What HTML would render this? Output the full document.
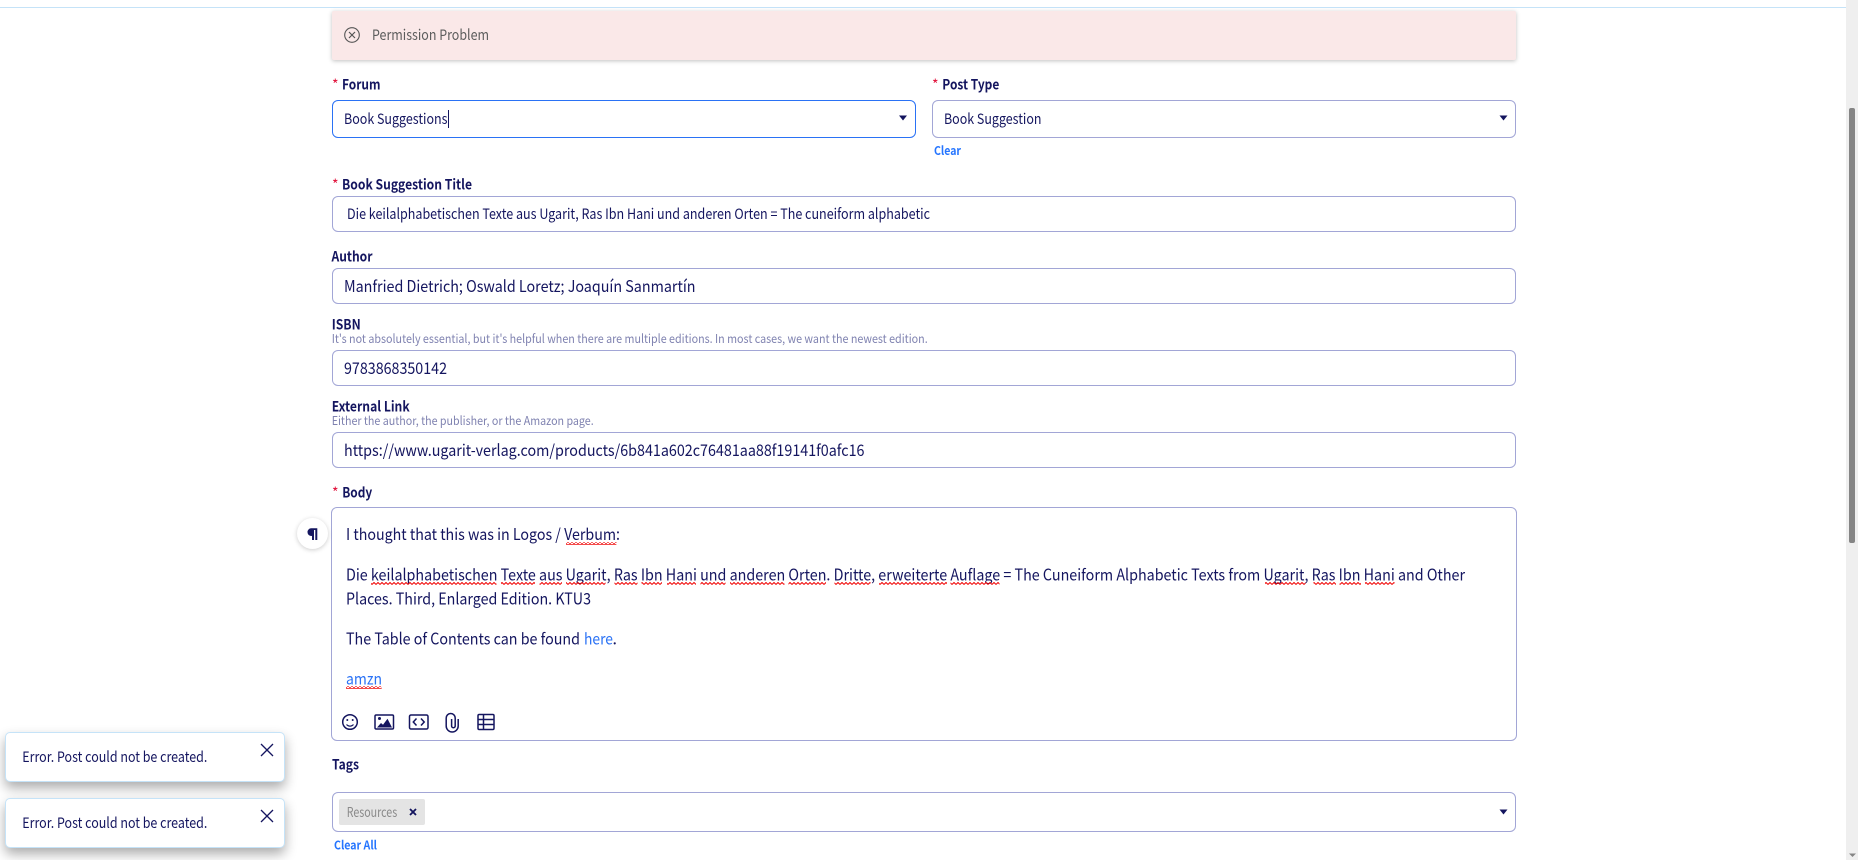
<!DOCTYPE html>
<html lang="en">
<head>
<meta charset="utf-8">
<title>New Post</title>
<style>
html,body{margin:0;padding:0;width:1858px;height:860px;overflow:hidden;background:#fff}
.b{position:absolute;box-sizing:border-box;background:#fff;border:1px solid #a2a6d6;border-radius:6px}
#line{position:absolute;left:0;top:7px;width:1846px;height:1px;background:#c5e3f8}
#sb{position:absolute;left:1846px;top:0;width:12px;height:860px;background:#efefef}
#th{position:absolute;left:1849px;top:108px;width:6px;height:435px;background:#858585;border-radius:2px}
#alert{position:absolute;left:332px;top:11px;width:1184px;height:49px;background:#fae8e8;border-radius:2px;box-shadow:0 1px 4px rgba(0,0,0,.25)}
.toast{position:absolute;left:5px;width:280px;height:50px;box-sizing:border-box;background:#fff;border:1px solid #c5e3f8;border-radius:5px;box-shadow:0 6px 12px rgba(0,0,0,.33)}
#pil{position:absolute;left:297px;top:518px;width:31px;height:31px;border-radius:50%;background:#fff;box-shadow:0 1px 5px rgba(0,0,0,.2)}
#chip{position:absolute;left:339px;top:799px;width:86px;height:26px;background:#e4e4e4;border-radius:2px}
svg{position:absolute;left:0;top:0}
text{font-family:"Noto Sans CJK SC","Liberation Sans",sans-serif;fill:#14155f;font-size:15px}
.l{font-weight:700;font-size:14px}
.s{fill:#e0103a;font-size:14px;font-weight:400}
.h{fill:#7f82b0;font-size:12px}
.a{fill:#2a72f5}
.c{fill:#2575ff;font-weight:700;font-size:12px}
.i{fill:none;stroke:#14155f;stroke-width:1.5}
</style>
</head>
<body>
<div id="line"></div>
<div id="sb"></div><div id="th"></div>
<div id="alert"></div>
<div class="b" style="left:332px;top:100px;width:584px;height:38px;border-color:#2a72f5"></div>
<div class="b" style="left:932px;top:100px;width:584px;height:38px"></div>
<div class="b" style="left:332px;top:196px;width:1184px;height:36px"></div>
<div class="b" style="left:332px;top:268px;width:1184px;height:36px"></div>
<div class="b" style="left:332px;top:350px;width:1184px;height:36px"></div>
<div class="b" style="left:332px;top:432px;width:1184px;height:36px"></div>
<div class="b" style="left:331px;top:507px;width:1186px;height:234px"></div>
<div class="b" style="left:332px;top:792px;width:1184px;height:40px"></div>
<div id="chip"></div>
<div id="pil"></div>
<div class="toast" style="top:732px"></div>
<div class="toast" style="top:798px"></div>

<svg width="1858" height="860" viewBox="0 0 1858 860" xmlns="http://www.w3.org/2000/svg">
<defs>
<pattern id="w" width="4" height="3" patternUnits="userSpaceOnUse"><path d="M0 2.500L2 .5L4 2.500" fill="none" stroke="#f00000" stroke-width="1"/></pattern>
</defs>

<!-- alert -->
<circle cx="352" cy="35" r="7.300" fill="none" stroke="#555" stroke-width="1.100"/>
<path d="M349 32l6 6M355 32l-6 6" stroke="#555" stroke-width="1.200" fill="none"/>
<text x="372" y="40" textLength="117" lengthAdjust="spacingAndGlyphs" style="fill:#5c5c5c;font-size:14.500px">Permission Problem</text>

<!-- forum / post type -->
<text x="332" y="89.500" class="s">*</text>
<text x="342" y="89.500" class="l" textLength="38.500" lengthAdjust="spacingAndGlyphs">Forum</text>
<text x="344" y="124" textLength="103.500" lengthAdjust="spacingAndGlyphs" style="font-size:14.500px">Book Suggestions</text>
<rect x="448" y="110" width="1" height="18" fill="#14155f"/>
<path d="M899 115.500h8l-4 5z" fill="#14155f"/>
<text x="932" y="89.500" class="s">*</text>
<text x="942.300" y="89.500" class="l" textLength="57" lengthAdjust="spacingAndGlyphs">Post Type</text>
<text x="944" y="124" textLength="97.500" lengthAdjust="spacingAndGlyphs" style="font-size:14.500px">Book Suggestion</text>
<path d="M1499.500 115.500h8l-4 5z" fill="#14155f"/>
<text x="934" y="155" class="c" textLength="27" lengthAdjust="spacingAndGlyphs">Clear</text>

<!-- title -->
<text x="332" y="189.500" class="s">*</text>
<text x="342" y="189.500" class="l" textLength="130" lengthAdjust="spacingAndGlyphs">Book Suggestion Title</text>
<text x="347" y="219" textLength="583" lengthAdjust="spacingAndGlyphs" style="font-size:14.500px">Die keilalphabetischen Texte aus Ugarit, Ras Ibn Hani und anderen Orten = The cuneiform alphabetic</text>

<!-- author -->
<text x="331.500" y="261.500" class="l" textLength="41" lengthAdjust="spacingAndGlyphs">Author</text>
<text x="344" y="292" textLength="351.500" lengthAdjust="spacingAndGlyphs" style="font-size:16px">Manfried Dietrich; Oswald Loretz; Joaquín Sanmartín</text>

<!-- isbn -->
<text x="331.700" y="329.500" class="l" textLength="29" lengthAdjust="spacingAndGlyphs">ISBN</text>
<text x="331.700" y="343" class="h" textLength="596" lengthAdjust="spacingAndGlyphs">It's not absolutely essential, but it's helpful when there are multiple editions. In most cases, we want the newest edition.</text>
<text x="344" y="374" textLength="103" lengthAdjust="spacingAndGlyphs" style="font-size:16px">9783868350142</text>

<!-- external link -->
<text x="331.700" y="411.500" class="l" textLength="78" lengthAdjust="spacingAndGlyphs">External Link</text>
<text x="331.700" y="425" class="h" textLength="262" lengthAdjust="spacingAndGlyphs">Either the author, the publisher, or the Amazon page.</text>
<text x="344" y="456" textLength="520.500" lengthAdjust="spacingAndGlyphs" style="font-size:16px">https://www.ugarit-verlag.com/products/6b841a602c76481aa88f19141f0afc16</text>

<!-- body -->
<text x="332" y="497.500" class="s">*</text>
<text x="342.200" y="497.500" class="l" textLength="30" lengthAdjust="spacingAndGlyphs">Body</text>

<!-- paragraph mark icon -->
<path d="M307.500 532.200a3.700 3.700 0 0 1 3.700-3.900h6.100v11.700h-2v-10h-1.300v10h-2v-4.100a3.800 3.800 0 0 1-4.500-3.700z" fill="#14155f"/>

<text x="346" y="540" textLength="274" lengthAdjust="spacingAndGlyphs" style="font-size:16px">I thought that this was in Logos / Verbum:</text>
<text x="346" y="580.500" textLength="1119" lengthAdjust="spacingAndGlyphs" style="font-size:16px">Die keilalphabetischen Texte aus Ugarit, Ras Ibn Hani und anderen Orten. Dritte, erweiterte Auflage = The Cuneiform Alphabetic Texts from Ugarit, Ras Ibn Hani and Other</text>
<text x="346" y="604.500" textLength="245" lengthAdjust="spacingAndGlyphs" style="font-size:16px">Places. Third, Enlarged Edition. KTU3</text>
<text x="346" y="644.500" textLength="234" lengthAdjust="spacingAndGlyphs" style="font-size:16px">The Table of Contents can be found</text>
<text x="584" y="644.500" class="a" textLength="29" lengthAdjust="spacingAndGlyphs" style="font-size:16px">here</text>
<text x="612.500" y="644.500" style="font-size:16px">.</text>
<text x="346" y="684.500" class="a" textLength="36" lengthAdjust="spacingAndGlyphs" style="font-size:16px">amzn</text>

<!-- spelling underlines -->
<g fill="url(#w)">
<rect x="566" y="542" width="50.500" height="3"/>
<rect x="371" y="582" width="125.500" height="3"/>
<rect x="501" y="582" width="34" height="3"/>
<rect x="539.500" y="582" width="22.500" height="3"/>
<rect x="566" y="582" width="39.500" height="3"/>
<rect x="614.500" y="582" width="23" height="3"/>
<rect x="641.500" y="582" width="20.500" height="3"/>
<rect x="667" y="582" width="29" height="3"/>
<rect x="700.500" y="582" width="25" height="3"/>
<rect x="730" y="582" width="54.500" height="3"/>
<rect x="788.500" y="582" width="37.500" height="3"/>
<rect x="834.500" y="582" width="36" height="3"/>
<rect x="879" y="582" width="68" height="3"/>
<rect x="950.500" y="582" width="49" height="3"/>
<rect x="1265" y="582" width="40.500" height="3"/>
<rect x="1313.500" y="582" width="22.500" height="3"/>
<rect x="1339.500" y="582" width="21.500" height="3"/>
<rect x="1365" y="582" width="29.500" height="3"/>
<rect x="346" y="686" width="35.500" height="3"/>
</g>

<!-- toolbar icons -->
<circle cx="350" cy="722" r="7.300" class="i"/>
<circle cx="347.300" cy="720" r="1" fill="#14155f"/><circle cx="352.700" cy="720" r="1" fill="#14155f"/>
<path d="M346.500 724.500c1.800 2.200 5.200 2.200 7 0" class="i" style="stroke-width:1.100"/>

<rect x="375" y="715" width="18.500" height="14" rx="1.200" class="i"/>
<path d="M377 727.500l4-4.500 2 1.800 4.500-6 4.500 8.700z" fill="#14155f"/>
<circle cx="379.500" cy="718.500" r="1.500" fill="#14155f"/>

<rect x="409.500" y="715" width="18.500" height="14" rx="1.500" class="i"/>
<path d="M416.500 718.500l-3.200 3.500 3.200 3.500M421 718.500l3.200 3.500-3.200 3.500" class="i"/>

<path d="M458.200 719v7a6 6 0 0 1-12 0v-8a4.500 4.500 0 0 1 9 0v8a1.800 1.800 0 0 1-3.600 0v-7" class="i"/>

<rect x="478" y="714.500" width="16" height="15" rx="1.200" class="i"/>
<path d="M478 719.500h16M478 724.500h16M483.500 714.500v15" class="i"/>

<!-- tags -->
<text x="332" y="769.500" class="l" textLength="27" lengthAdjust="spacingAndGlyphs">Tags</text>
<text x="346.700" y="817" textLength="50.500" lengthAdjust="spacingAndGlyphs" style="fill:#8a8a8a;font-size:13.500px">Resources</text>
<path d="M410 809l6 6M416 809l-6 6" stroke="#14155f" stroke-width="1.800" fill="none"/>
<path d="M1499.500 809.500h8l-4 5z" fill="#14155f"/>
<text x="334" y="849.500" class="c" textLength="43" lengthAdjust="spacingAndGlyphs">Clear All</text>

<!-- toasts -->
<text x="22.300" y="762" textLength="185" lengthAdjust="spacingAndGlyphs" style="font-size:14.500px">Error. Post could not be created.</text>
<path d="M261 744l12 12M273 744l-12 12" stroke="#14155f" stroke-width="1.300" fill="none"/>
<text x="22.300" y="828" textLength="185" lengthAdjust="spacingAndGlyphs" style="font-size:14.500px">Error. Post could not be created.</text>
<path d="M261 810l12 12M273 810l-12 12" stroke="#14155f" stroke-width="1.300" fill="none"/>

<!-- scrollbar arrow -->
<path d="M1849 853.500h7l-3.500 3.500z" fill="#858585"/>
</svg>
</body>
</html>
